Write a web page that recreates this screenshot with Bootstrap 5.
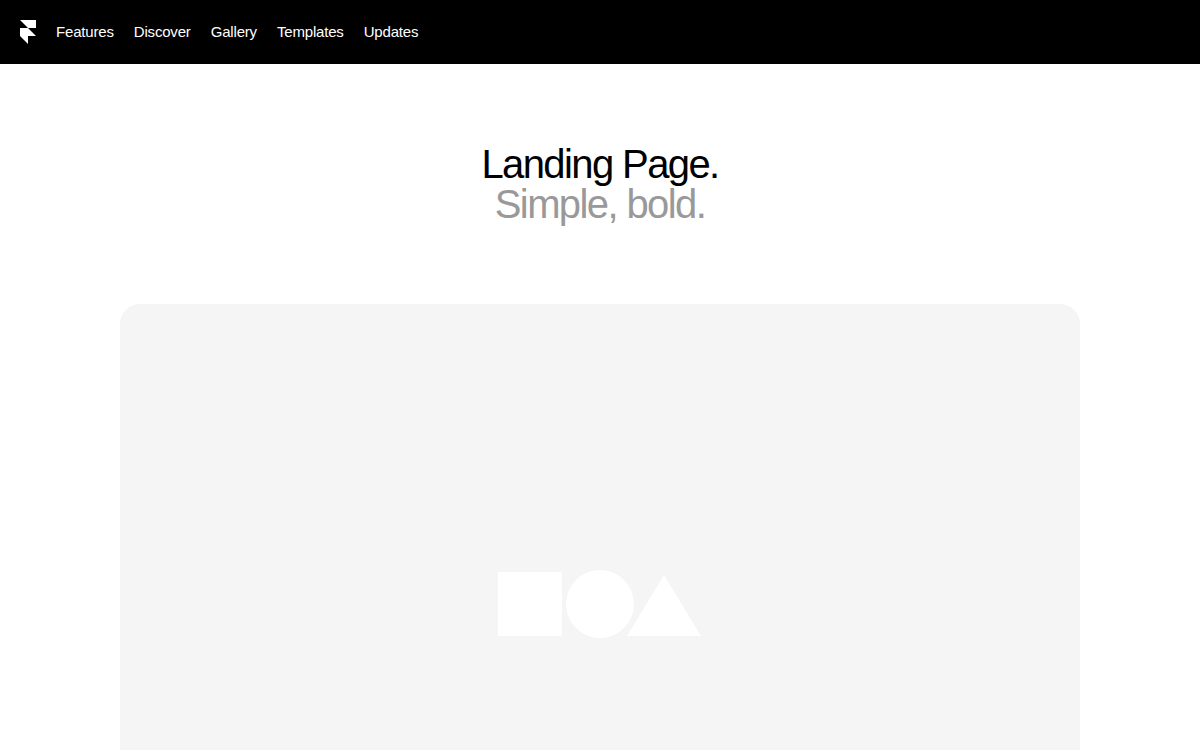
<!DOCTYPE html>
<html lang="en">
<head>
<meta charset="utf-8">
<meta name="viewport" content="width=device-width, initial-scale=1">
<title>Landing Page</title>
<link rel="stylesheet" href="https://cdn.jsdelivr.net/npm/bootstrap@5.3.0/dist/css/bootstrap.min.css">
<style>
  body { font-family: "Liberation Sans", Arial, sans-serif; color: #000; background: #fff; }
  .site-header { height: 64px; background: #000; padding: 0 20px; gap: 20px; }
  .site-header .nav { gap: 20px; }
  .site-header .nav-link { padding: 0; font-size: 15px; line-height: 20px; letter-spacing: -0.012em; color: #fff; }
  .hero { padding: 80px 20px; }
  .hero-title { font-size: 40px; line-height: 40px; letter-spacing: -0.04em; font-weight: 400; }
  .hero-title .subtitle { color: #999; }
  .preview { width: 80%; height: 600px; border-radius: 20px; background: #f5f5f5; }
</style>
</head>
<body>
<header class="site-header d-flex align-items-center">
  <a href="#" class="d-flex" aria-label="Home">
    <svg width="16" height="24" viewBox="0 0 16 24" fill="#fff" aria-hidden="true"><path d="M0 0h16v8H8zM0 8h8l8 8H8v8l-8-8z"/></svg>
  </a>
  <nav class="nav" aria-label="Main">
    <a class="nav-link" href="#">Features</a>
    <a class="nav-link" href="#">Discover</a>
    <a class="nav-link" href="#">Gallery</a>
    <a class="nav-link" href="#">Templates</a>
    <a class="nav-link" href="#">Updates</a>
  </nav>
</header>
<main>
  <section class="hero text-center">
    <h1 class="hero-title mb-0">Landing Page.<br><span class="subtitle">Simple, bold.</span></h1>
  </section>
  <section class="preview mx-auto d-flex align-items-center justify-content-center">
    <svg width="204" height="70" viewBox="0 0 204 70" fill="#fff" aria-hidden="true"><rect x="0" y="3" width="64" height="64" rx="2"/><circle cx="102" cy="35" r="34"/><path d="M166 6L203 67H129Z"/></svg>
  </section>
</main>
<script src="https://cdn.jsdelivr.net/npm/bootstrap@5.3.0/dist/js/bootstrap.bundle.min.js"></script>
</body>
</html>
